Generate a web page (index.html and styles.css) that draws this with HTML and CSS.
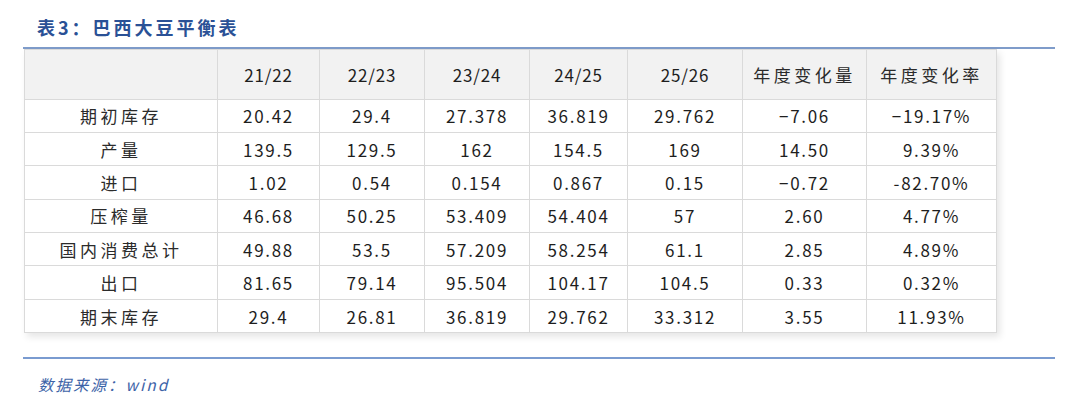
FILE: index.html
```html
<!DOCTYPE html>
<html lang="zh-CN">
<head>
<meta charset="utf-8">
<title>表3：巴西大豆平衡表</title>
<link rel="stylesheet" href="styles.css">
</head>
<body>
<div class="page">
  <h1 class="title">表3：巴西大豆平衡表</h1>
  <div class="rule"></div>
  <table class="grid">
    <colgroup>
      <col class="c0"><col class="c1"><col class="c2"><col class="c3"><col class="c4"><col class="c5"><col class="c6"><col class="c7">
    </colgroup>
    <thead>
      <tr>
        <th></th><th class="num">21/22</th><th class="num">22/23</th><th class="num">23/24</th><th class="num">24/25</th><th class="num">25/26</th><th class="cn">年度变化量</th><th class="cn">年度变化率</th>
      </tr>
    </thead>
    <tbody>
      <tr><td class="cn">期初库存</td><td>20.42</td><td>29.4</td><td>27.378</td><td>36.819</td><td>29.762</td><td>−7.06</td><td>−19.17%</td></tr>
      <tr><td class="cn">产量</td><td>139.5</td><td>129.5</td><td>162</td><td>154.5</td><td>169</td><td>14.50</td><td>9.39%</td></tr>
      <tr><td class="cn">进口</td><td>1.02</td><td>0.54</td><td>0.154</td><td>0.867</td><td>0.15</td><td>−0.72</td><td>-82.70%</td></tr>
      <tr><td class="cn">压榨量</td><td>46.68</td><td>50.25</td><td>53.409</td><td>54.404</td><td>57</td><td>2.60</td><td>4.77%</td></tr>
      <tr><td class="cn">国内消费总计</td><td>49.88</td><td>53.5</td><td>57.209</td><td>58.254</td><td>61.1</td><td>2.85</td><td>4.89%</td></tr>
      <tr><td class="cn">出口</td><td>81.65</td><td>79.14</td><td>95.504</td><td>104.17</td><td>104.5</td><td>0.33</td><td>0.32%</td></tr>
      <tr><td class="cn">期末库存</td><td>29.4</td><td>26.81</td><td>36.819</td><td>29.762</td><td>33.312</td><td>3.55</td><td>11.93%</td></tr>
    </tbody>
  </table>
  <div class="rule rule-bottom"></div>
  <p class="source">数据来源：wind</p>
</div>
</body>
</html>
```

FILE: styles.css
```css
html, body {
  margin: 0;
  padding: 0;
  background: #ffffff;
}

.page {
  width: 1032px;
  padding: 0 0 0 23px;
  font-family: "Noto Sans CJK SC", "Noto Sans", sans-serif;
  color: #222222;
}

.title {
  margin: 0;
  height: 47px;
  padding-left: 14px;
  display: flex;
  align-items: center;
  font-size: 18px;
  font-weight: 700;
  letter-spacing: 3px;
  color: #2a5196;
  line-height: 1;
  padding-top: 6px;
  box-sizing: border-box;
}

.rule {
  height: 1.5px;
  background: #7f9cca;
}

.rule-bottom {
  margin-top: 24px;
  background: #7a9bd0;
}

.grid {
  margin-left: 1px;
  width: 972px;
  table-layout: fixed;
  border-collapse: collapse;
  box-shadow: 3px 4px 7px rgba(0, 0, 0, 0.10);
  background: #ffffff;
}

.c0 { width: 193px; }
.c1 { width: 102px; }
.c2 { width: 105px; }
.c3 { width: 105px; }
.c4 { width: 98px; }
.c5 { width: 115px; }
.c6 { width: 124px; }
.c7 { width: 130px; }

.grid th,
.grid td {
  border: 1.5px solid #dadada;
  text-align: center;
  padding: 0;
  font-weight: 400;
  font-size: 17px;
  line-height: 1;
  color: #1e1e1e;
}

.grid thead th {
  height: 49px;
  background: #f2f2f2;
}

.grid tbody td {
  height: 32.4px;
  letter-spacing: 1.7px;
}

.grid th.num {
  letter-spacing: 0.8px;
  font-size: 17px;
}

.grid .cn {
  letter-spacing: 3.5px;
  color: #2b2b2b;
}

.source {
  margin: 14px 0 0 15px;
  font-size: 15.5px;
  font-style: italic;
  letter-spacing: 2px;
  color: #3e64a8;
}
```
